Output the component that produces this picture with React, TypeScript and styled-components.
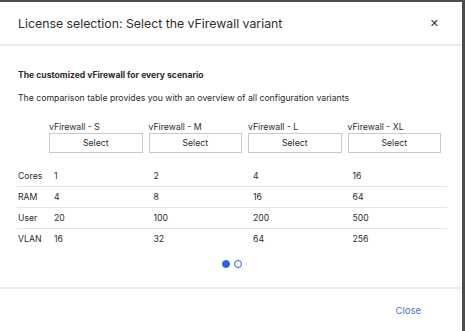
import React from 'react'
import styled, { createGlobalStyle } from 'styled-components'

const GlobalStyle = createGlobalStyle`
  html, body {
    margin: 0;
    padding: 0;
    background: #4d4d4d;
    font-family: Inter, "Noto Sans", sans-serif;
    color: #2b2b2b;
  }
`

const variants = [
  { name: 'vFirewall - S', cores: 1, ram: 4, user: 20, vlan: 16 },
  { name: 'vFirewall - M', cores: 2, ram: 8, user: 100, vlan: 32 },
  { name: 'vFirewall - L', cores: 4, ram: 16, user: 200, vlan: 64 },
  { name: 'vFirewall - XL', cores: 16, ram: 64, user: 500, vlan: 256 },
]

const rows: { label: string; key: 'cores' | 'ram' | 'user' | 'vlan' }[] = [
  { label: 'Cores', key: 'cores' },
  { label: 'RAM', key: 'ram' },
  { label: 'User', key: 'user' },
  { label: 'VLAN', key: 'vlan' },
]

const Modal = styled.div`
  margin-top: 2px;
  width: 462px;
  height: 329px;
  background: #fff;
  display: flex;
  flex-direction: column;
`

const Header = styled.div`
  height: 42px;
  display: flex;
  align-items: center;
  justify-content: space-between;
  padding: 0 23px 0 18px;
  border-bottom: 2px solid #ececec;
`

const Title = styled.h2`
  margin: 0;
  font-size: 12.3px;
  font-weight: 400;
  color: #2e2e2e;
`

const CloseX = styled.button`
  border: 0;
  background: none;
  padding: 0;
  font-family: "DejaVu Sans", sans-serif;
  font-size: 11px;
  color: #333;
  cursor: pointer;
`

const Body = styled.div`
  flex: 1;
  padding: 24px 16px 0 17px;
`

const Lead = styled.p`
  margin: 0 0 0 1px;
  font-size: 8.6px;
  font-weight: 700;
`

const Intro = styled.p`
  margin: 13px 0 0 1px;
  font-size: 8.7px;
`

const Grid = styled.div`
  display: grid;
  grid-template-columns: 32px repeat(4, 99.5px);
  margin-top: 19px;
`

const ColHead = styled.div`
  padding-right: 6px;
  font-size: 8.7px;
  display: flex;
  flex-direction: column;
  gap: 1px;
  margin-bottom: 13px;
`

const SelectButton = styled.button`
  height: 20px;
  border: 1px solid #c9c9c9;
  background: #fff;
  font-family: inherit;
  font-size: 8.7px;
  color: #2b2b2b;
  padding: 0;
`

const Cell = styled.div<{ $last?: boolean; $label?: boolean }>`
  height: 20px;
  display: flex;
  align-items: center;
  font-size: 8.7px;
  padding-left: ${(p) => (p.$label ? '1px' : '5px')};
  border-bottom: ${(p) => (p.$last ? '0' : '1px solid #e3e3e3')};
`

const Dots = styled.div`
  display: flex;
  justify-content: center;
  gap: 4px;
  margin-top: 11px;
`

const Dot = styled.span<{ $active?: boolean }>`
  width: 8px;
  height: 8px;
  box-sizing: border-box;
  border-radius: 50%;
  border: 1.5px solid #2d5fe8;
  background: ${(p) => (p.$active ? '#2d5fe8' : '#fff')};
`

const Footer = styled.div`
  height: 42px;
  border-top: 2px solid #ececec;
  display: flex;
  align-items: center;
  justify-content: flex-end;
  padding-right: 41px;
`

const CloseLink = styled.button`
  border: 0;
  background: none;
  padding: 0;
  font-family: inherit;
  font-size: 9.5px;
  color: #4f72d1;
  cursor: pointer;
`

export default function App() {
  return (
    <>
      <GlobalStyle />
      <Modal>
        <Header>
          <Title>License selection: Select the vFirewall variant</Title>
          <CloseX>✕</CloseX>
        </Header>
        <Body>
          <Lead>The customized vFirewall for every scenario</Lead>
          <Intro>The comparison table provides you with an overview of all configuration variants</Intro>
          <Grid>
            <div />
            {variants.map((v) => (
              <ColHead key={v.name}>
                <span>{v.name}</span>
                <SelectButton>Select</SelectButton>
              </ColHead>
            ))}
            {rows.map((r, i) => (
              <React.Fragment key={r.key}>
                <Cell $label $last={i === rows.length - 1}>{r.label}</Cell>
                {variants.map((v) => (
                  <Cell key={v.name} $last={i === rows.length - 1}>{v[r.key]}</Cell>
                ))}
              </React.Fragment>
            ))}
          </Grid>
          <Dots>
            <Dot $active />
            <Dot />
          </Dots>
        </Body>
        <Footer>
          <CloseLink>Close</CloseLink>
        </Footer>
      </Modal>
    </>
  )
}
